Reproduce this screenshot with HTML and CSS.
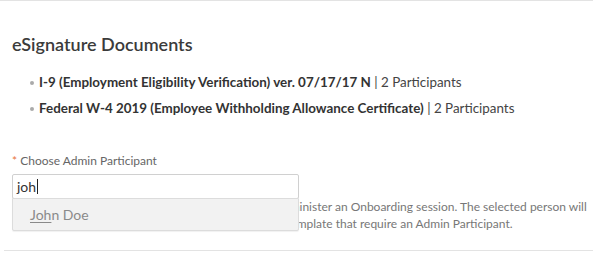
FILE: index.html
```html
<!DOCTYPE html>
<html lang="en">
<head>
<meta charset="utf-8">
<title>eSignature Documents</title>
<link rel="stylesheet" href="styles.css">
</head>
<body>
<div class="rule rule-top"></div>
<section class="section">
  <h2 class="title">eSignature Documents</h2>
  <ul class="docs">
    <li><strong>I-9 (Employment Eligibility Verification) ver. 07/17/17 N</strong> | 2 Participants</li>
    <li><strong>Federal W-4 2019 (Employee Withholding Allowance Certificate)</strong> | 2 Participants</li>
  </ul>
  <div class="field">
    <label class="label"><span class="req">*</span> Choose Admin Participant</label>
    <div class="combo">
      <div class="input">joh<span class="caret"></span></div>
      <div class="menu">
        <div class="option"><span class="match">Joh</span>n Doe</div>
      </div>
    </div>
    <p class="help">Select the person in your team who will be able to administer an Onboarding session. The selected person will<br>be assigned to all of the tasks and documents in the template that require an Admin Participant.</p>
  </div>
</section>
<div class="rule rule-bottom"></div>
</body>
</html>
```

FILE: styles.css
```css
html, body {
  margin: 0;
  padding: 0;
  background: #ffffff;
}
body {
  font-family: Lato, "Open Sans", "Liberation Sans", sans-serif;
  color: #333333;
  width: 593px;
  height: 254px;
  overflow: hidden;
}
.rule {
  height: 1px;
  background: #e3e3e3;
}
.section {
  padding: 33px 0 0 12px;
}
.title {
  margin: 0;
  font-size: 18px;
  line-height: 20px;
  font-weight: 600;
  color: #3b3b3b;
}
.docs {
  list-style: none;
  margin: 15px 0 0 0;
  padding: 0 0 0 18px;
}
.docs li {
  position: relative;
  font-size: 13.4px;
  line-height: 26px;
  color: #444444;
  padding-left: 9px;
  white-space: nowrap;
}
.docs li::before {
  content: "";
  position: absolute;
  left: 0;
  top: 12px;
  width: 4px;
  height: 4px;
  border-radius: 50%;
  background: #aaaaaa;
}
.docs strong {
  font-weight: 700;
  color: #333333;
}
.field {
  margin-top: 32px;
}
.label {
  display: block;
  font-size: 12px;
  line-height: 16px;
  color: #666666;
  margin-bottom: 5px;
}
.req {
  color: #e8743b;
}
.combo {
  position: relative;
  width: 287px;
}
.input {
  box-sizing: border-box;
  height: 25px;
  border: 1px solid #d0d0d0;
  border-radius: 2px;
  padding: 0 4px;
  font-size: 14px;
  line-height: 23px;
  color: #333333;
  display: flex;
  align-items: center;
}
.caret {
  display: inline-block;
  width: 1px;
  height: 15px;
  background: #222222;
  margin-left: 1px;
}
.menu {
  position: absolute;
  left: 0;
  right: 0;
  top: 24px;
  height: 33px;
  box-sizing: border-box;
  background: #f2f2f2;
  border: 1px solid #dcdcdc;
  border-radius: 0 0 2px 2px;
  box-shadow: 0 1px 1px rgba(0,0,0,0.06);
  display: flex;
  align-items: center;
  z-index: 1;
}
.option {
  padding-left: 17px;
  font-size: 14px;
  color: #8a8a8a;
}
.match {
  text-decoration: underline;
  text-underline-offset: 2px;
}
.help {
  margin: -1px 0 0 0;
  font-size: 12px;
  line-height: 17px;
  color: #777777;
  white-space: nowrap;
}
.rule-bottom {
  margin: 18px 0 0 4px;
}
```
